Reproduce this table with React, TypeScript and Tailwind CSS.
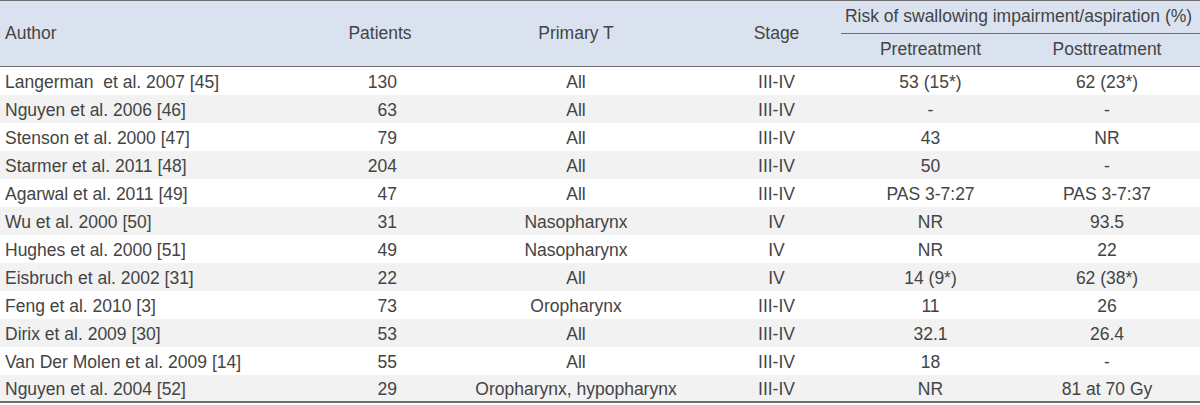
const rows = [
  ['Langerman\u00a0 et al. 2007 [45]', '130', 'All', 'III-IV', '53 (15*)', '62 (23*)'],
  ['Nguyen et al. 2006 [46]', '63', 'All', 'III-IV', '-', '-'],
  ['Stenson et al. 2000 [47]', '79', 'All', 'III-IV', '43', 'NR'],
  ['Starmer et al. 2011 [48]', '204', 'All', 'III-IV', '50', '-'],
  ['Agarwal et al. 2011 [49]', '47', 'All', 'III-IV', 'PAS 3-7:27', 'PAS 3-7:37'],
  ['Wu et al. 2000 [50]', '31', 'Nasopharynx', 'IV', 'NR', '93.5'],
  ['Hughes et al. 2000 [51]', '49', 'Nasopharynx', 'IV', 'NR', '22'],
  ['Eisbruch et al. 2002 [31]', '22', 'All', 'IV', '14 (9*)', '62 (38*)'],
  ['Feng et al. 2010 [3]', '73', 'Oropharynx', 'III-IV', '11', '26'],
  ['Dirix et al. 2009 [30]', '53', 'All', 'III-IV', '32.1', '26.4'],
  ['Van Der Molen et al. 2009 [14]', '55', 'All', 'III-IV', '18', '-'],
  ['Nguyen et al. 2004 [52]', '29', 'Oropharynx, hypopharynx', 'III-IV', 'NR', '81 at 70 Gy'],
];

export default function App() {
  return (
    <div className="w-[1200px] h-[405px] bg-white">
      <table
        className="w-[1200px] table-fixed border-separate border-spacing-0 text-[17.5px] leading-none text-[#444444]"
        style={{ fontFamily: '"Liberation Sans", Arial, sans-serif' }}
      >
        <colgroup>
          <col className="w-[330px]" />
          <col className="w-[100px]" />
          <col className="w-[292px]" />
          <col className="w-[119px]" />
          <col className="w-[179px]" />
          <col className="w-[180px]" />
        </colgroup>
        <thead className="bg-[#dae2f0]">
          <tr className="h-[34px]">
            <th rowSpan={2} className="border-t border-b border-[#6e6e6e] pl-[5px] text-left font-normal">
              Author
            </th>
            <th rowSpan={2} className="border-t border-b border-[#6e6e6e] text-center font-normal">
              Patients
            </th>
            <th rowSpan={2} className="border-t border-b border-[#6e6e6e] text-center font-normal">
              Primary T
            </th>
            <th rowSpan={2} className="border-t border-b border-[#6e6e6e] pr-[10px] text-center font-normal">
              Stage
            </th>
            <th colSpan={2} className="border-t border-b border-[#6e6e6e] pr-[4px] text-center font-normal">
              Risk of swallowing impairment/aspiration (%)
            </th>
          </tr>
          <tr className="h-[33px]">
            <th className="border-b border-[#6e6e6e] text-center font-normal">Pretreatment</th>
            <th className="border-b border-[#6e6e6e] pr-[6px] text-center font-normal">Posttreatment</th>
          </tr>
        </thead>
        <tbody>
          {rows.map((r, i) => {
            const last = i === rows.length - 1;
            const cell = last ? 'border-b-2 border-[#6e6e6e]' : '';
            return (
              <tr key={i} className={`h-[28px] ${i % 2 === 1 ? 'bg-[#f1f2f1]' : 'bg-white'}`}>
                <td className={`pt-[3px] pl-[5px] text-left whitespace-pre ${cell}`}>{r[0]}</td>
                <td className={`pt-[3px] pr-[33px] text-right ${cell}`}>{r[1]}</td>
                <td className={`pt-[3px] text-center ${cell}`}>{r[2]}</td>
                <td className={`pt-[3px] pr-[10px] text-center ${cell}`}>{r[3]}</td>
                <td className={`pt-[3px] text-center ${cell}`}>{r[4]}</td>
                <td className={`pt-[3px] pr-[6px] text-center ${cell}`}>{r[5]}</td>
              </tr>
            );
          })}
        </tbody>
      </table>
    </div>
  );
}
